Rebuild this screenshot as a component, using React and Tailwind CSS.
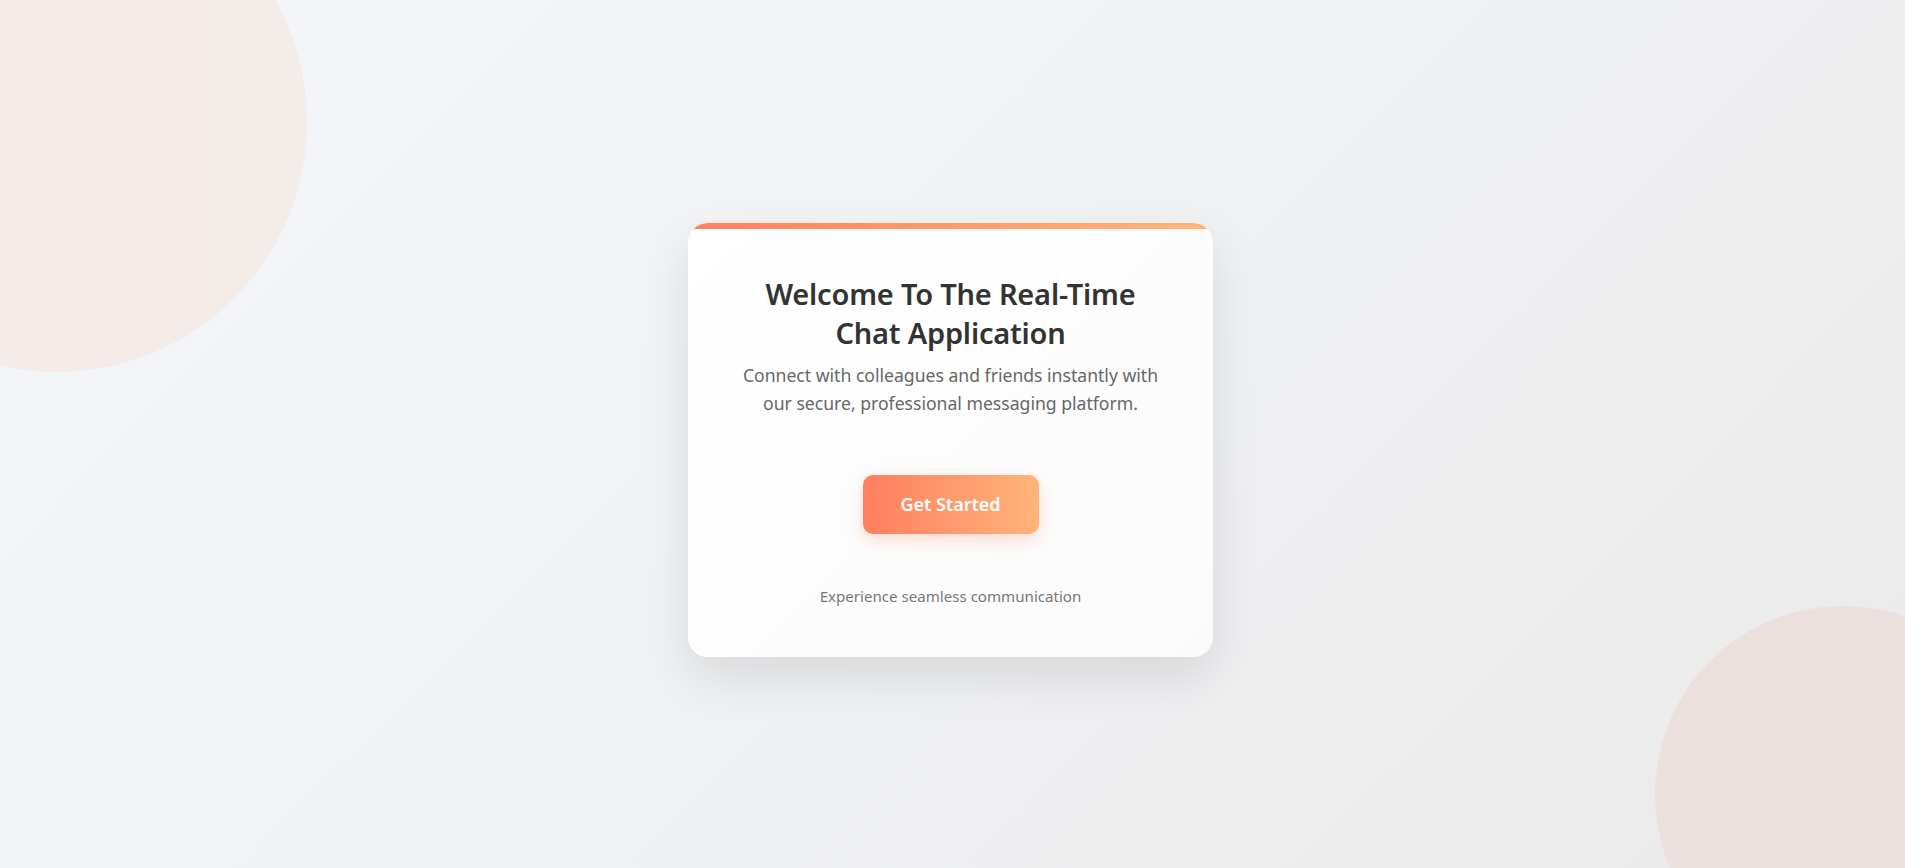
export default function App() {
  return (
    <div
      className="relative w-full h-[868px] overflow-hidden flex items-center justify-center bg-[linear-gradient(135deg,#f5f6f9_0%,#f1f2f4_45%,#eaeaea_100%)]"
      style={{ fontFamily: '"Noto Sans", "Open Sans", sans-serif' }}
    >
      <div className="absolute left-[-193px] top-[-128px] w-[500px] h-[500px] rounded-full bg-[linear-gradient(90deg,#f6ebea,#f4ece8)]" />
      <div className="absolute left-[1655px] top-[606px] w-[376px] h-[376px] rounded-full bg-[linear-gradient(135deg,#ece0dd,#eae1de)]" />

      <div className="relative z-10 w-[525px] mt-[12px] ml-[-4px] rounded-[20px] overflow-hidden bg-[linear-gradient(135deg,#ffffff,#fbfbfb)] shadow-[0_20px_50px_rgba(0,0,0,0.10)]">
        <div className="h-[6px] bg-[linear-gradient(90deg,#ff7f5e,#ffb67b)]" />
        <div className="px-[40px] pt-[45px] pb-[50px] flex flex-col items-center text-center">
          <h1 className="text-[29px] leading-[39px] font-semibold text-[#333333] tracking-[-0.2px]">
            Welcome To The Real-Time
            <br />
            Chat Application
          </h1>
          <p className="mt-[9px] text-[17.6px] leading-[28px] text-[#666666]">
            Connect with colleagues and friends instantly with
            <br />
            our secure, professional messaging platform.
          </p>
          <button className="mt-[58px] w-[176px] h-[59px] rounded-[10px] bg-[linear-gradient(90deg,#ff7f5e,#ffb47a)] text-white text-[18px] font-semibold shadow-[0_6px_18px_rgba(255,127,94,0.28)]">
            Get Started
          </button>
          <p className="mt-[51px] text-[15.1px] leading-[22px] text-[#777777]">
            Experience seamless communication
          </p>
        </div>
      </div>
    </div>
  );
}
